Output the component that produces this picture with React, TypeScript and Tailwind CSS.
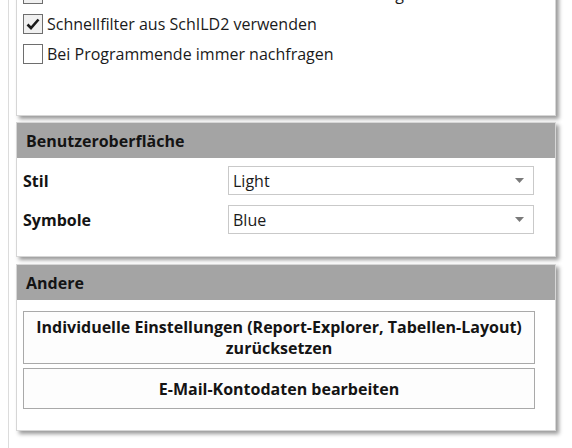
import React from "react";

const font = { fontFamily: '"Segoe UI", "Open Sans", "Noto Sans", sans-serif' };

function Check({ checked, label }: { checked?: boolean; label: string }) {
  return (
    <div className="flex h-[30px] items-center gap-[4px]">
      <span
        className={`flex h-[20px] w-[20px] items-center justify-center border border-[#6e6e6e] ${
          checked ? "bg-[#f0f0f0]" : "bg-white"
        }`}
      >
        {checked && (
          <svg width="14" height="12" viewBox="0 0 14 12">
            <path d="M1.5 6.5 L5 10 L12.5 1.5" fill="none" stroke="#1a1a1a" strokeWidth="2.6" />
          </svg>
        )}
      </span>
      <span className="text-[16px] text-[#1a1a1a]">{label}</span>
    </div>
  );
}

function Panel({ title, children, className }: { title?: string; children: React.ReactNode; className?: string }) {
  return (
    <div
      className={`w-[540px] shrink-0 border border-[#d6d6d6] bg-white shadow-[3px_3px_4px_rgba(0,0,0,0.4)] ${className ?? ""}`}
    >
      {title && (
        <div className="flex h-[35px] items-center bg-[#a4a4a4] pl-[9px] text-[16px] font-bold text-[#141414]">
          {title}
        </div>
      )}
      {children}
    </div>
  );
}

function Select({ value }: { value: string }) {
  return (
    <div className="flex h-[29px] w-[306px] items-center justify-between border border-[#c9c9c9] bg-white pl-[4px] pr-[9px]">
      <span className="text-[16px] text-[#1a1a1a]">{value}</span>
      <svg width="9" height="5" viewBox="0 0 9 5">
        <path d="M0 0 H9 L4.5 5 Z" fill="#7a7a7a" />
      </svg>
    </div>
  );
}

export default function App() {
  return (
    <div className="h-[448px] w-[572px] overflow-hidden bg-white pl-[8px]" style={font}>
      <div className="flex h-full flex-col border-l border-[#dcdcdc] pl-[7px]">
        <Panel className="mt-[-23px] h-[139px]">
          <div className="pl-[6px] pt-[1px]">
            <Check checked label="Bei Schülerwechsel immer Wahlfachseite anzeigen" />
            <Check checked label="Schnellfilter aus SchILD2 verwenden" />
            <Check label="Bei Programmende immer nachfragen" />
          </div>
        </Panel>

        <Panel title="Benutzeroberfläche" className="mt-[6px]">
          <div className="flex flex-col gap-[10px] pb-[22px] pl-[6px] pr-[21px] pt-[8px]">
            <div className="flex items-center justify-between">
              <span className="text-[16px] font-bold text-[#141414]">Stil</span>
              <Select value="Light" />
            </div>
            <div className="flex items-center justify-between">
              <span className="text-[16px] font-bold text-[#141414]">Symbole</span>
              <Select value="Blue" />
            </div>
          </div>
        </Panel>

        <Panel title="Andere" className="mt-[7px]">
          <div className="flex flex-col gap-[4px] pb-[21px] pl-[6px] pr-[20px] pt-[11px]">
            <button className="h-[53px] border border-[#a9a9a9] bg-[#fdfdfd] text-[16px] font-bold leading-[21px] text-[#141414]">
              Individuelle Einstellungen (Report-Explorer, Tabellen-Layout)
              <br />
              zurücksetzen
            </button>
            <button className="h-[41px] border border-[#a9a9a9] bg-[#fdfdfd] text-[16px] font-bold text-[#141414]">
              E-Mail-Kontodaten bearbeiten
            </button>
          </div>
        </Panel>
      </div>
    </div>
  );
}
